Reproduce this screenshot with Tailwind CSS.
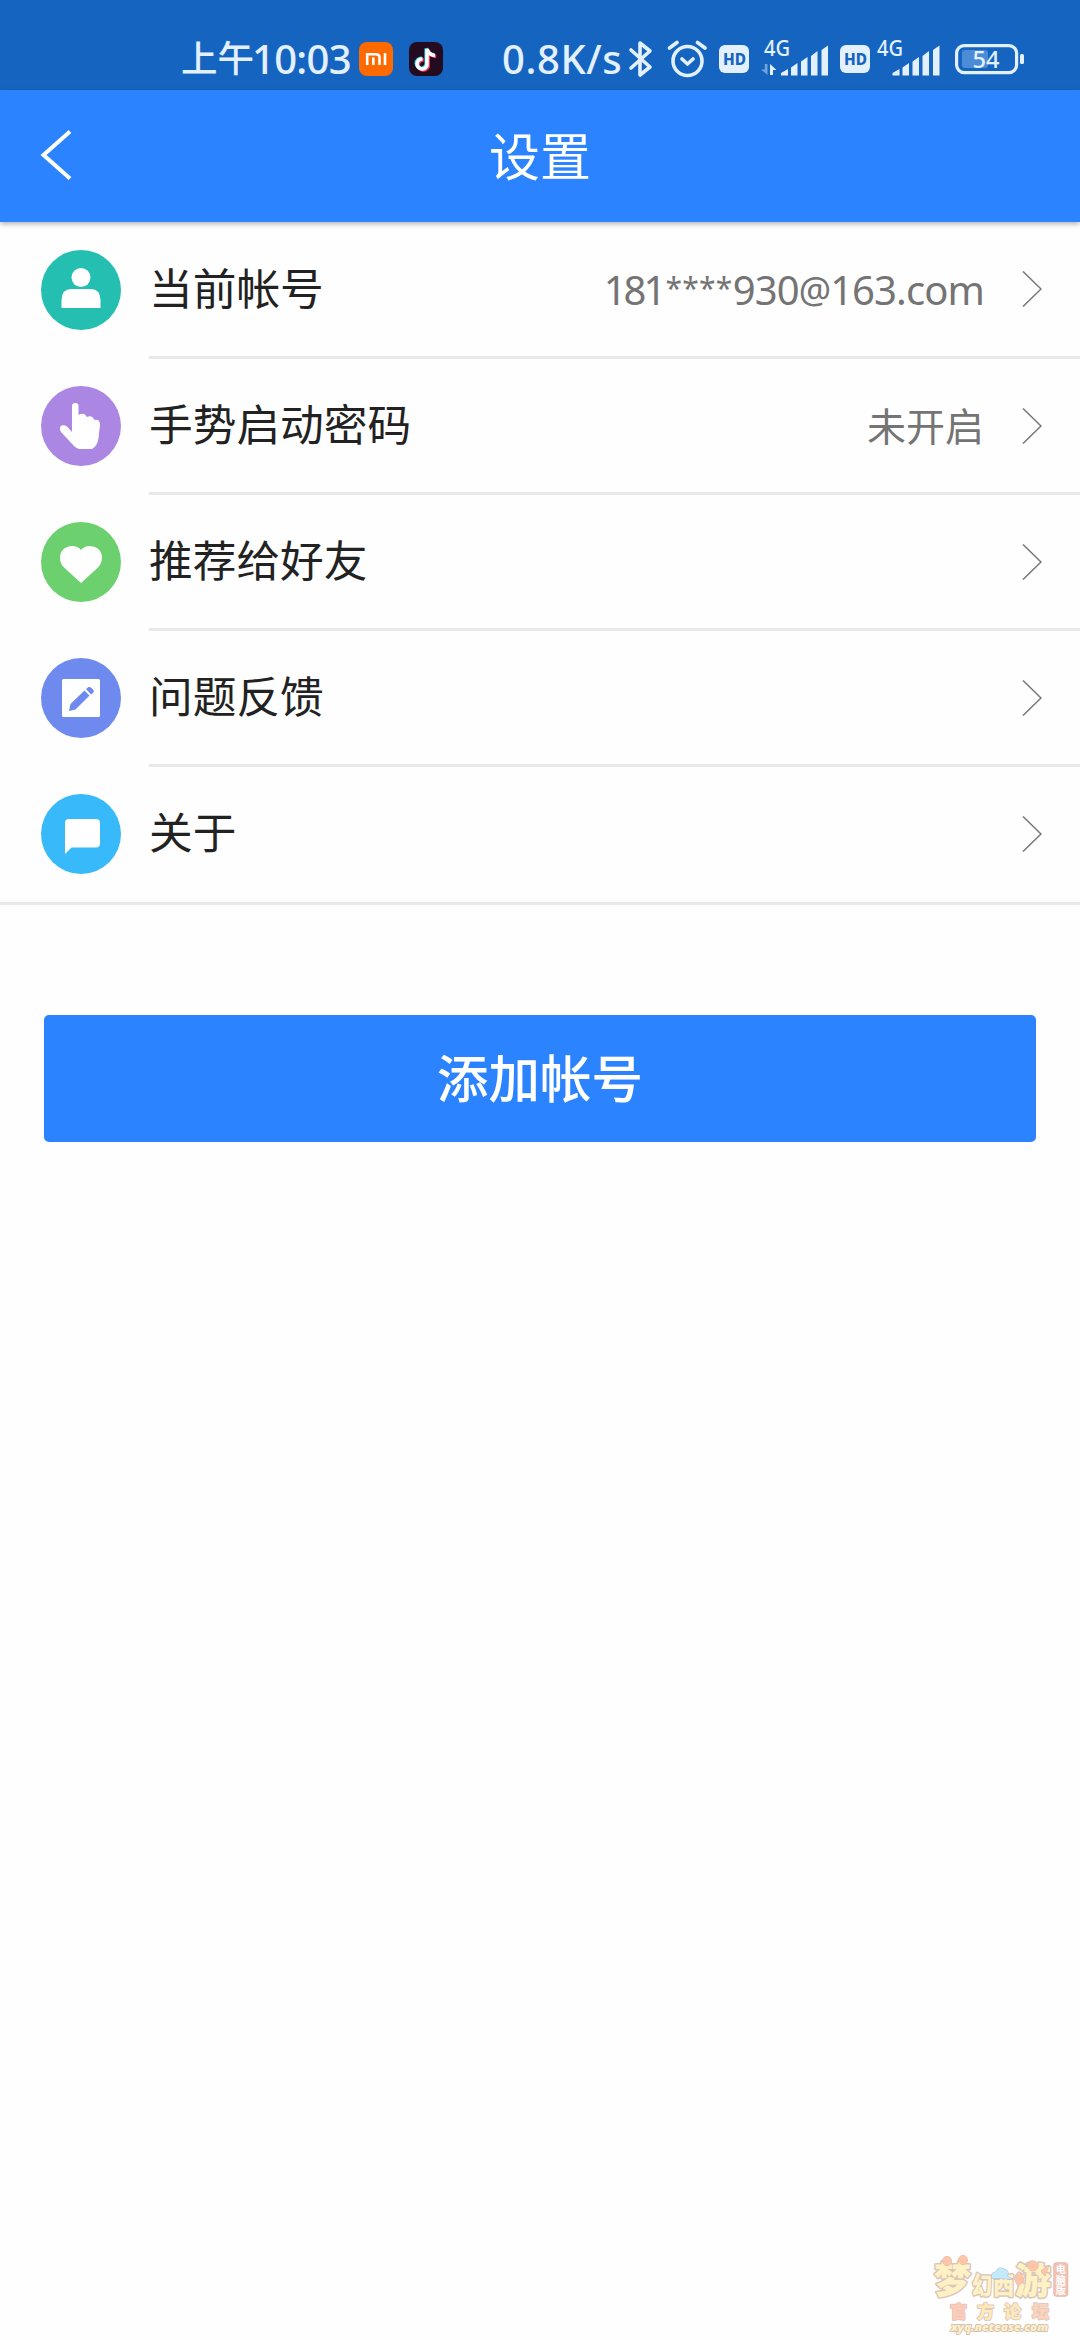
<!DOCTYPE html>
<html lang="zh-CN">
<head>
    <meta charset="UTF-8">
    <meta name="viewport" content="width=device-width, initial-scale=1.0">
    <title>设置</title>
    <script src="https://cdn.jsdelivr.net/npm/@tailwindcss/browser@4"></script>
</head>
<body class="bg-[#fefefe] font-['Noto_Sans','Noto_Sans_CJK_SC',sans-serif]">
    <div class="relative flex flex-col w-[1080px] h-[2340px] overflow-hidden">
        <!-- Status Bar -->
        <div class="flex items-center h-[90px] pt-7 pl-[181px] bg-[#1565c0] text-[#e3f0ff] font-medium">
            <div class="flex items-center w-[178px] whitespace-nowrap leading-[54px]">
                <span class="text-[36.500px] pb-0.5">上午</span>
                <span class="text-[40px] tracking-[-0.7px] -ml-0.5">10:03</span>
            </div>
            <svg class="w-[34px] h-[34px] shrink-0" viewBox="0 0 34 34" fill="none">
                <rect width="34" height="34" rx="8" fill="#ff6a00"/>
                <path d="M8.200 23V12.200H17Q20.500 12.200 20.500 15.500V23M14.300 15.500V23M26 11V23" stroke="#fff" stroke-width="2.600"/>
            </svg>
            <svg class="w-[34px] h-[34px] ml-4 shrink-0" viewBox="0 0 34 34" fill="none" stroke-width="3.500">
                <rect width="34" height="34" rx="8" fill="#250b20"/>
                <path d="M18 7V21A5 5 0 1 1 13.500 17M18 7Q19.500 13 26 13.500" stroke="#f0405f" transform="translate(1.200 1)"/>
                <path d="M18 7V21A5 5 0 1 1 13.500 17M18 7Q19.500 13 26 13.500" stroke="#37dce0" transform="translate(-.8 -.8)"/>
                <path d="M18 7V21A5 5 0 1 1 13.500 17M18 7Q19.500 13 26 13.500" stroke="#fff"/>
            </svg>
            <span class="w-[120px] ml-[59px] shrink-0 text-[40px] leading-[54px] tracking-[0.6px] whitespace-nowrap">0.8K/s</span>
            <svg class="w-[26px] h-10 ml-[6px] shrink-0" viewBox="0 0 26 40" fill="none" stroke="currentColor" stroke-width="3.600" stroke-linejoin="round" stroke-linecap="round">
                <path d="M3 11L22 28L12 36V4L22 12L3 29"/>
            </svg>
            <svg class="w-10 h-10 ml-[13px] shrink-0" viewBox="0 0 40 40" fill="none" stroke="currentColor" stroke-width="3.600" stroke-linecap="round" stroke-linejoin="round">
                <circle cx="20.500" cy="22" r="14.500"/>
                <path d="M15 20L20.500 25L26 20M2.500 9L10 3.500M30.500 3.500L38 9"/>
            </svg>
            <svg class="w-[30px] h-7 ml-3 shrink-0" viewBox="0 0 30 28">
                <rect width="30" height="28" rx="6" fill="#e3f0ff"/>
                <text x="4" y="20" font-size="16" font-weight="800" fill="#1565c0" textLength="23" lengthAdjust="spacingAndGlyphs">HD</text>
            </svg>
            <svg class="w-[68px] h-10 ml-3 shrink-0 overflow-visible" viewBox="0 0 68 40" fill="currentColor">
                <text x="3" y="17" font-size="21" textLength="26" lengthAdjust="spacingAndGlyphs">4G</text>
                <path d="M6.500 25V36L0 30.500H3.800V25Z" opacity=".45"/>
                <path d="M9 25L15.500 31H12V36H9Z"/>
                <path d="M20 34L27 30V36.500H20ZM30 28.500L36.500 24V36.500H30ZM40 22.500L46.500 18V36.500H40ZM50 17L56.500 12V36.500H50ZM60.500 11L67 6.500V36.500H60.500Z"/>
            </svg>
            <svg class="w-[30px] h-7 ml-[11px] shrink-0" viewBox="0 0 30 28">
                <rect width="30" height="28" rx="6" fill="#e3f0ff"/>
                <text x="4" y="20" font-size="16" font-weight="800" fill="#1565c0" textLength="23" lengthAdjust="spacingAndGlyphs">HD</text>
            </svg>
            <svg class="w-[66px] h-10 ml-[5px] shrink-0 overflow-visible" viewBox="-2 0 66 40" fill="currentColor">
                <text x="0" y="17" font-size="21" textLength="26" lengthAdjust="spacingAndGlyphs">4G</text>
                <path transform="translate(-4.500 0)" d="M20 34L27 30V36.500H20ZM30 28.500L36.500 24V36.500H30ZM40 22.500L46.500 18V36.500H40ZM50 17L56.500 12V36.500H50ZM60.500 11L67 6.500V36.500H60.500Z"/>
            </svg>
            <svg class="w-[70px] h-[30px] ml-[14px] shrink-0 overflow-visible" viewBox="0 0 70 30" fill="currentColor">
                <rect x="1.600" y="1.600" width="60" height="27" rx="7.500" fill="none" stroke="currentColor" stroke-width="3.200"/>
                <rect x="7" y="6" width="26" height="18" rx="3" fill="#4c8bd6"/>
                <rect x="65" y="10" width="4" height="10" rx="1.500"/>
                <text x="17.500" y="24" font-size="24" textLength="27" lengthAdjust="spacingAndGlyphs">54</text>
            </svg>
        </div>

        <!-- Header -->
        <div class="relative z-10 flex items-center justify-center h-[132px] bg-[#2b83ff] text-white shadow-[0_2px_5px_rgba(0,0,0,0.3)]">
            <svg class="absolute left-10 top-10 w-8 h-[50px]" viewBox="0 0 32 50" fill="none" stroke="currentColor" stroke-width="4">
                <path d="M30 1.500L3.500 25L30 48.500"/>
            </svg>
            <h1 class="text-[51px] leading-none">设置</h1>
        </div>

        <!-- Settings List -->
        <div class="flex flex-col text-[43.700px] leading-none text-[#222]">
            <div class="flex h-[137px] pl-[41px]">
                <svg class="w-20 h-20 mt-7 mr-[28px] shrink-0" viewBox="0 0 80 80" fill="#fff">
                    <circle cx="40" cy="40" r="40" fill="#25bfb1"/>
                    <circle cx="40" cy="27.500" r="9.500"/>
                    <path d="M20.500 58V50Q21 39 30 39H50Q59 39 59.500 50V58Z"/>
                </svg>
                <div class="flex flex-1 items-center border-b-3 border-[#e8e8e8] pr-[38px]">
                    <span class="flex-1">当前帐号</span>
                    <span class="flex items-center pt-0.5 text-[40px] leading-[54px] tracking-[-0.9px] text-[#747474]">
                        <span class="tracking-[-3px]">181</span>
                        <span class="pl-0.5 pb-1 text-[30px] tracking-[0.3px]">****</span>
                        <span>930</span>
                        <span class="text-[36px]">@</span>
                        <span>163.com</span>
                    </span>
                    <svg class="w-5 h-9 ml-[38px]" viewBox="0 0 20 36" fill="none" stroke="#777" stroke-width="1.500"><path d="M1 .5L19 18L1 35.500"/></svg>
                </div>
            </div>
            <div class="flex h-[136px] pl-[41px]">
                <svg class="w-20 h-20 mt-[27px] mr-[28px] shrink-0" viewBox="0 0 80 80" fill="#fff">
                    <circle cx="40" cy="40" r="40" fill="#ab87e3"/>
                    <path d="M31 46V20Q31 17 34.200 17Q37.500 17 37.500 20V29Q43 25.500 46 31Q51 28.500 53.500 34Q59 33 59 39L57.500 52Q56.500 60 51 63H38Q35 62 33 60L20 46Q17.500 42 20.500 39.500Q23 38.500 26 40.500Z"/>
                </svg>
                <div class="flex flex-1 items-center border-b-3 border-[#e8e8e8] pr-[38px]">
                    <span class="flex-1 pb-0.5">手势启动密码</span>
                    <span class="text-[39px] text-[#747474]">未开启</span>
                    <svg class="w-5 h-9 ml-[38px]" viewBox="0 0 20 36" fill="none" stroke="#777" stroke-width="1.500"><path d="M1 .5L19 18L1 35.500"/></svg>
                </div>
            </div>
            <div class="flex h-[136px] pl-[41px]">
                <svg class="w-20 h-20 mt-[27px] mr-[28px] shrink-0" viewBox="0 0 80 80" fill="#fff">
                    <circle cx="40" cy="40" r="40" fill="#6cd06f"/>
                    <path d="M40 61L23 45.500C17 39 18 30 24 26C30 22.500 36.500 23.500 40 28C43.500 23.500 50 22.500 56 26C62 30 63 39 57 45.500Z"/>
                </svg>
                <div class="flex flex-1 items-center border-b-3 border-[#e8e8e8] pr-[38px]">
                    <span class="flex-1 pb-0.5">推荐给好友</span>
                    <svg class="w-5 h-9" viewBox="0 0 20 36" fill="none" stroke="#777" stroke-width="1.500"><path d="M1 .5L19 18L1 35.500"/></svg>
                </div>
            </div>
            <div class="flex h-[136px] pl-[41px]">
                <svg class="w-20 h-20 mt-[27px] mr-[28px] shrink-0" viewBox="0 0 80 80" fill="#fff">
                    <circle cx="40" cy="40" r="40" fill="#6f8aee"/>
                    <rect x="21" y="21" width="38" height="38" rx="1.500"/>
                    <path d="M28 53L29.500 46L43.500 32.500L48.500 37.500L34.500 51.500ZM45 31L47.500 29Q49 28.500 50.500 30L52.500 32Q53.500 33.500 52 35L50 36.500Z" fill="#6f8aee"/>
                </svg>
                <div class="flex flex-1 items-center border-b-3 border-[#e8e8e8] pr-[38px]">
                    <span class="flex-1 pb-0.5">问题反馈</span>
                    <svg class="w-5 h-9" viewBox="0 0 20 36" fill="none" stroke="#777" stroke-width="1.500"><path d="M1 .5L19 18L1 35.500"/></svg>
                </div>
            </div>
            <div class="flex h-[138px] pl-[41px] border-b-3 border-[#e8e8e8]">
                <svg class="w-20 h-20 mt-[27px] mr-[28px] shrink-0" viewBox="0 0 80 80" fill="#fff">
                    <circle cx="40" cy="40" r="40" fill="#38b9fa"/>
                    <path d="M24 60V29Q24 25 28 25H55Q59 25 59 29V49Q59 53.500 55 53.500H30.500Z"/>
                </svg>
                <div class="flex flex-1 items-center pr-[38px] pb-0.5">
                    <span class="flex-1 pb-0.5">关于</span>
                    <svg class="w-5 h-9" viewBox="0 0 20 36" fill="none" stroke="#777" stroke-width="1.500"><path d="M1 .5L19 18L1 35.500"/></svg>
                </div>
            </div>
        </div>

        <!-- Add Account -->
        <button class="mt-[110px] mx-11 h-[127px] rounded-[5px] bg-[#2b83ff] text-white text-[51.500px] leading-none font-medium">添加帐号</button>

        <!-- Forum watermark -->
        <svg class="absolute right-0 bottom-0 w-40 h-[100px]" viewBox="0 0 160 100" stroke-linejoin="round" paint-order="stroke" font-weight="900">
            <g opacity=".8">
                <g fill="#fff0b8" stroke="#d3b8a8" stroke-width="3">
                    <text x="14" y="54" font-size="37" textLength="37" lengthAdjust="spacingAndGlyphs">梦</text>
                    <text x="52" y="54" font-size="24" textLength="20" lengthAdjust="spacingAndGlyphs">幻</text>
                    <text x="73" y="54" font-size="24" textLength="21" lengthAdjust="spacingAndGlyphs">西</text>
                    <text x="95" y="54" font-size="36" textLength="36" lengthAdjust="spacingAndGlyphs">游</text>
                </g>
                <g fill="#ffb795" stroke="#d8a294" stroke-width="1">
                    <circle cx="27" cy="21" r="4.500"/>
                    <circle cx="43" cy="20" r="4.500"/>
                    <circle cx="113" cy="26" r="5"/>
                    <path d="M94 38L101 33L104 41L98 46ZM121 31L129 25L125 36Z"/>
                </g>
                <path d="M72 38Q71 32 76 32Q78 26 84 29Q90 31 87 36L92 39Z" fill="#b5e4fa" stroke="#8fb8d8" stroke-width="1.200"/>
                <rect x="134" y="23" width="13.500" height="33" rx="3" fill="#efb3a0" stroke="#d7a79c" stroke-width="1.500"/>
                <g fill="#fff" font-size="10" font-weight="700">
                    <text x="135.800" y="33">电</text>
                    <text x="135.800" y="43.500">脑</text>
                    <text x="135.800" y="54">版</text>
                </g>
                <g font-size="17" stroke="#dabdb4" stroke-width="2">
                    <text x="30" y="78" fill="#ffbfa6">官</text>
                    <text x="57" y="78" fill="#ffe6a6">方</text>
                    <text x="84" y="78" fill="#ffe6a6">论</text>
                    <text x="112" y="78" fill="#ffc9a6">坛</text>
                </g>
                <text x="31" y="91" font-size="11" font-style="italic" fill="#ffedb8" stroke="#cdb0a2" stroke-width="1.800" textLength="97" lengthAdjust="spacingAndGlyphs">xyq.netease.com</text>
            </g>
        </svg>
    </div>
</body>
</html>
